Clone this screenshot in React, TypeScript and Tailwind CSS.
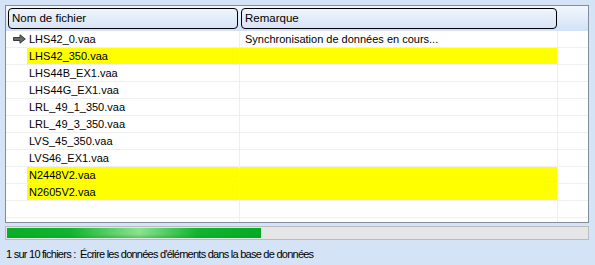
const rows = [
  { name: 'LHS42_0.vaa', note: 'Synchronisation de données en cours...', current: true, hl: false },
  { name: 'LHS42_350.vaa', note: '', hl: true },
  { name: 'LHS44B_EX1.vaa', note: '', hl: false },
  { name: 'LHS44G_EX1.vaa', note: '', hl: false },
  { name: 'LRL_49_1_350.vaa', note: '', hl: false },
  { name: 'LRL_49_3_350.vaa', note: '', hl: false },
  { name: 'LVS_45_350.vaa', note: '', hl: false },
  { name: 'LVS46_EX1.vaa', note: '', hl: false },
  { name: 'N2448V2.vaa', note: '', hl: true },
  { name: 'N2605V2.vaa', note: '', hl: true },
]

function CurrentArrow() {
  return (
    <svg width="13" height="10" viewBox="0 0 13 10" className="ml-[5px]">
      <path d="M0.5 3.5 H7 V0.8 L12.3 5 L7 9.2 V6.5 H0.5 Z" fill="#6b6b6b" stroke="#3a3a3a" strokeWidth="1" strokeLinejoin="round" />
    </svg>
  )
}

export default function App() {
  return (
    <div
      className="w-[595px] h-[265px] overflow-hidden bg-[#d5e3f7] pt-[5px] pl-[5px] pr-[6px] text-[11px] text-black"
      style={{ fontFamily: '"Liberation Sans", Arial, sans-serif' }}
    >
      {/* file list */}
      <div className="h-[218px] border border-[#828d9b] bg-white overflow-hidden">
        <div className="flex h-[25px] bg-gradient-to-b from-[#f3f7fd] to-[#d2e1f6] pt-[2px] pl-[2px]">
          <div className="w-[230px] h-[21px] rounded-[4px] border border-black flex items-center px-[3px] text-[11.5px]">Nom de fichier</div>
          <div className="ml-[3px] w-[316px] h-[21px] rounded-[4px] border border-black flex items-center px-[3px] text-[11.5px]">Remarque</div>
        </div>
        {rows.map((r) => (
          <div key={r.name} className="flex h-[17px] border-b border-[#efefef]">
            <div className="w-[21px] flex items-center justify-center">
              {r.current && <CurrentArrow />}
            </div>
            <div className={`w-[213px] pl-[2px] flex items-center border-r border-[#efefef] ${r.hl ? 'bg-[#ffff00]' : ''}`}>{r.name}</div>
            <div className={`w-[318px] pl-[5px] flex items-center border-r border-[#efefef] ${r.hl ? 'bg-[#ffff00]' : ''}`}>{r.note}</div>
            <div className="flex-1" />
          </div>
        ))}
        <div className="flex h-[17px] border-b border-[#efefef]">
          <div className="w-[234px] border-r border-[#efefef]" />
          <div className="w-[318px] border-r border-[#efefef]" />
        </div>
        <div className="flex h-[17px]">
          <div className="w-[234px] border-r border-[#efefef]" />
          <div className="w-[318px] border-r border-[#efefef]" />
        </div>
      </div>

      {/* progress */}
      <div className="mt-[3px] h-[14px] border border-[#b8bcc2] bg-[#e6e6e6] p-[1px] flex">
        <div className="w-[254px] h-full bg-[linear-gradient(90deg,#08ae27_0%,#10b42f_25%,#8de28f_52%,#10b42f_75%,#06ab25_100%)] relative">
          <div className="absolute inset-x-0 bottom-0 h-[4px] bg-gradient-to-b from-transparent to-[#0a9b22]/40" />
        </div>
      </div>

      <div className="mt-[6px] pl-[1px] h-[16px] leading-[16px] whitespace-pre text-[11px] tracking-[-0.75px]">
        1 sur 10 fichiers :  Écrire les données d'éléments dans la base de données
      </div>
    </div>
  )
}
